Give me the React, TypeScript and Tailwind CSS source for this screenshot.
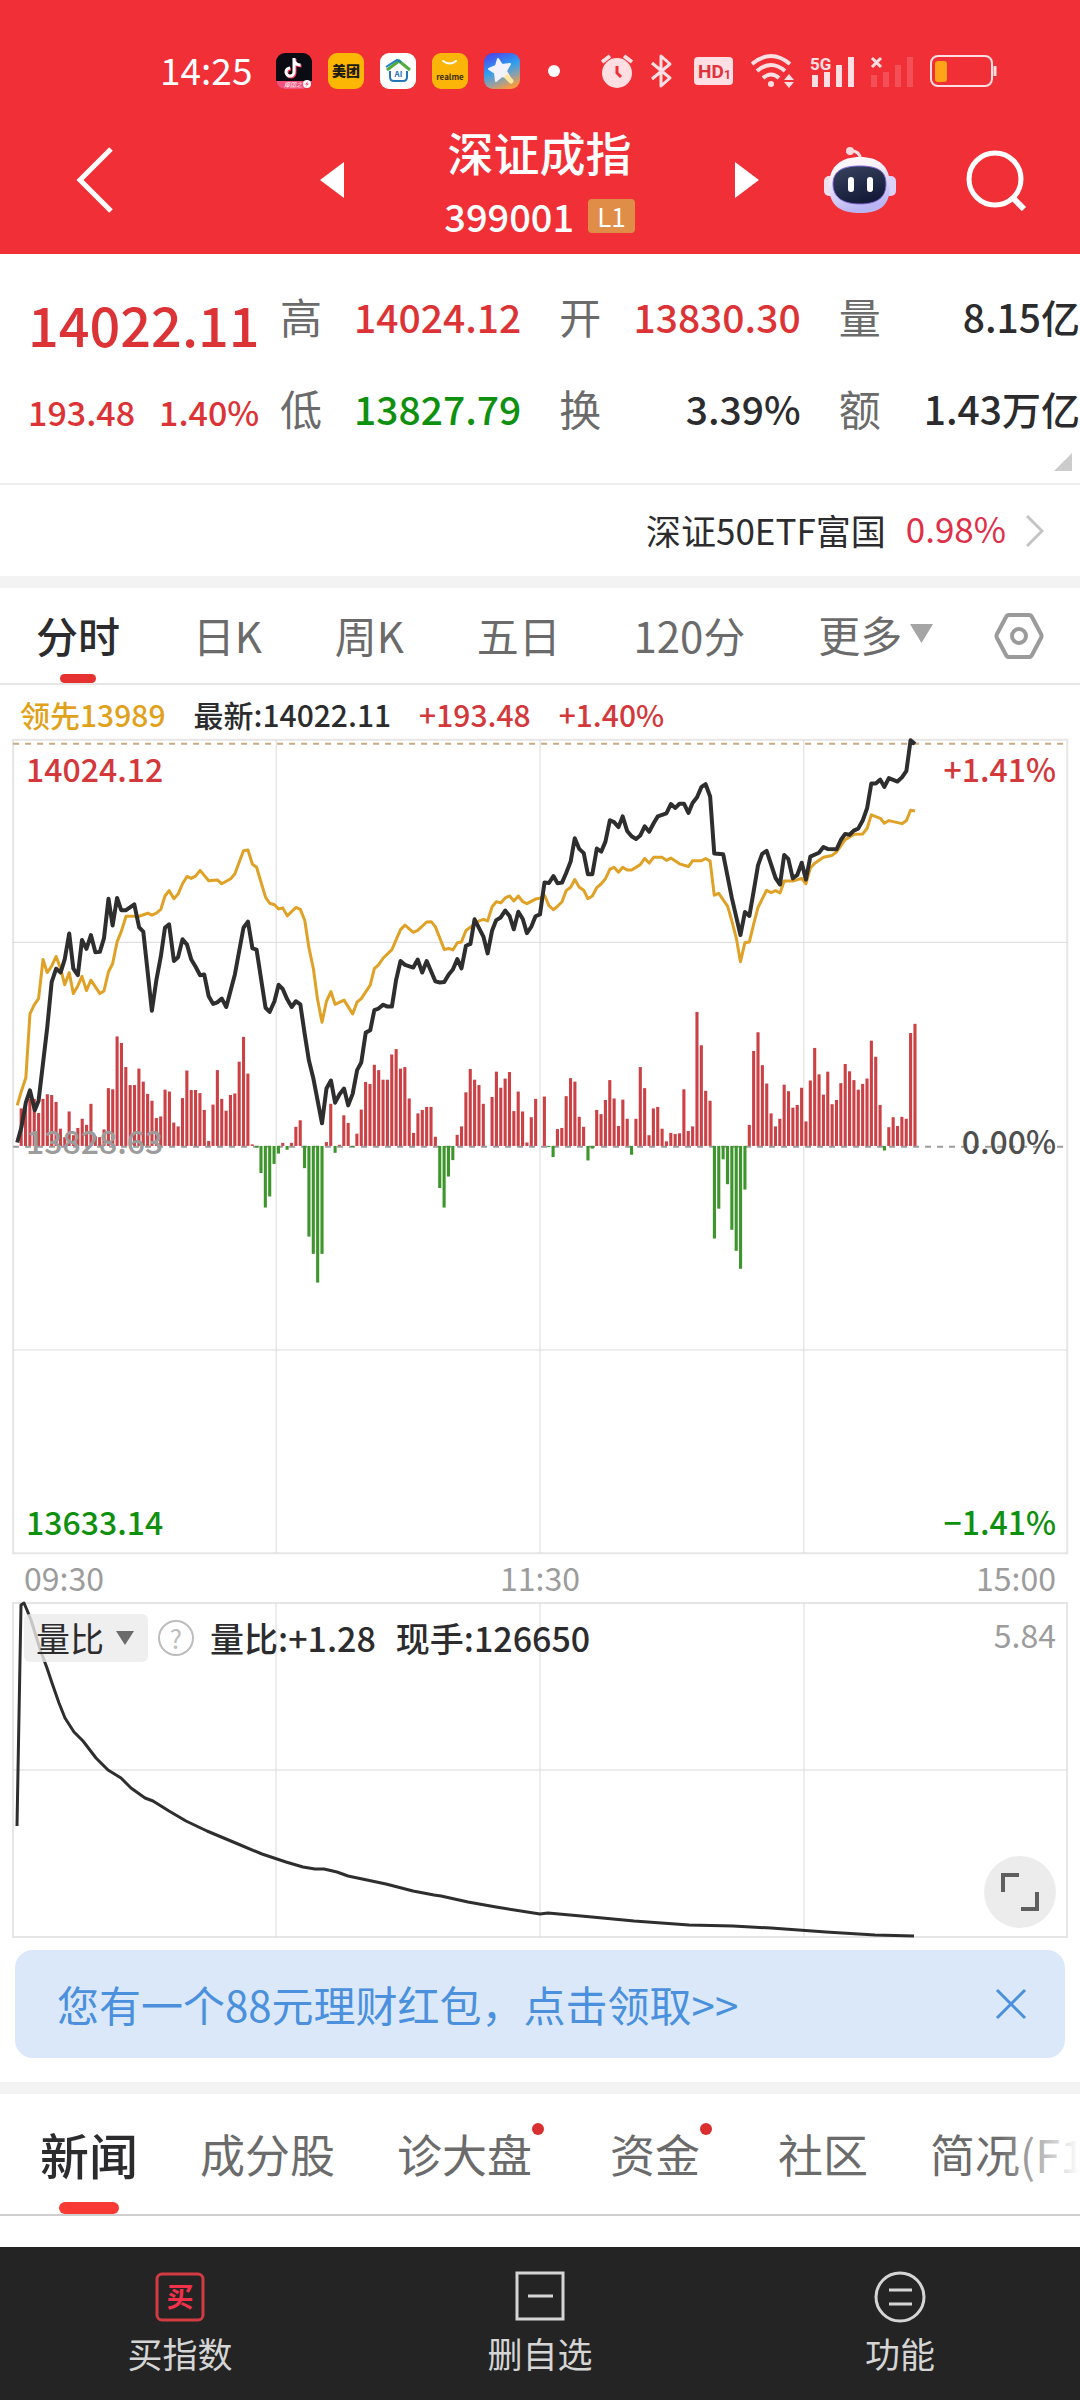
import { useState } from 'react';

// y of the free end of every minute bar, the zero line is at BASE_Y
const BASE_Y = 1113;
const BAR_ENDS = [
  1015, 1005, 990, 990, 1027, 990, 978, 980, 998, 1068, 1090, 1023, 1085, 1066, 1042, 1058, 1003, 1088, 1090, 1070,
  962, 965, 827, 844, 907, 954, 954, 911, 945, 977, 995, 1040, 1036, 966, 971, 1052, 1062, 988, 916, 967,
  967, 975, 1019, 1100, 1005, 915, 990, 1021, 980, 976, 893, 828, 924, 1109, 1117, 1184, 1274, 1245, 1160, 1133,
  1105, 1123, 1105, 1063, 1046, 1171, 1350, 1395, 1470, 1395, 1103, 1003, 1131, 1110, 1033, 1053, 1116, 1081, 1018, 946,
  951, 901, 915, 940, 940, 874, 860, 911, 907, 989, 1079, 1028, 1019, 1011, 1011, 1089, 1223, 1274, 1193, 1150,
  1084, 1062, 973, 912, 940, 954, 1003, 1113, 985, 919, 961, 937, 920, 1022, 971, 1023, 1104, 1038, 990, 1113,
  984, 1116, 1142, 1069, 1066, 983, 936, 945, 1037, 1063, 1151, 1120, 1019, 1030, 993, 941, 989, 1061, 992, 1042,
  1136, 1042, 907, 962, 1085, 1015, 1011, 1068, 1101, 1079, 1082, 1080, 965, 1074, 1062, 763, 850, 969, 995, 1355,
  1277, 1148, 1213, 1332, 1387, 1434, 1227, 1058, 865, 816, 902, 950, 1028, 1062, 1042, 953, 970, 1013, 1006, 961,
  1049, 942, 857, 926, 979, 919, 1004, 993, 949, 899, 918, 941, 966, 951, 937, 838, 880, 1006, 1125, 1064,
  1038, 1061, 1037, 1042, 818, 794,
];

const PRICE_LINE =
  '50,1104 62,1065 75,1000 87,968 101,1020 112,995 137,805 150,685 163,650 176,660 188,625 201,558 213,650 226,667 238,575 251,598 264,562 277,607 290,606 302,570 315,467 327,537 340,465 352,497 366,497 390,482 404,542 416,553 441,760 454,680 467,618 479,543 491,534 505,630 517,620 530,573 543,587 555,625 568,645 581,667 593,665 606,722 619,742 631,738 644,728 657,750 682,665 707,543 720,527 733,597 745,600 771,752 783,763 797,735 809,692 821,703 834,730 847,750 859,735 872,743 885,822 897,890 910,937 935,1054 948,963 961,942 973,1000 986,978 999,963 1011,1007 1024,977 1037,915 1049,895 1062,817 1075,811 1087,758 1099,754 1113,744 1125,749 1138,749 1150,680 1163,630 1176,640 1200,647 1213,626 1226,660 1239,630 1264,683 1277,686 1290,685 1303,665 1315,652 1328,625 1340,649 1353,590 1366,585 1378,521 1404,567 1416,610 1429,550 1441,523 1454,516 1467,498 1480,513 1492,547 1505,501 1518,520 1530,557 1543,540 1555,513 1568,508 1581,425 1594,426 1607,408 1619,427 1632,425 1644,400 1657,370 1669,309 1682,337 1695,348 1707,403 1720,403 1733,336 1746,344 1758,318 1771,262 1783,267 1796,280 1808,252 1821,290 1834,304 1847,311 1859,302 1872,278 1885,292 1898,270 1910,252 1935,244 1948,220 1961,230 1973,219 1986,219 1999,243 2011,217 2024,202 2037,175 2049,168 2062,200 2074,349 2100,351 2125,465 2150,562 2163,502 2176,512 2188,450 2201,380 2213,350 2226,342 2252,413 2265,430 2277,353 2289,363 2302,414 2315,405 2328,373 2340,417 2353,357 2378,347 2391,332 2403,337 2429,338 2442,313 2454,298 2467,300 2479,289 2492,284 2505,263 2518,230 2530,166 2543,166 2556,156 2568,175 2581,152 2606,161 2619,150 2632,133 2644,53 2657,63';

const LEAD_LINE =
  '50,1007 62,970 75,935 87,768 99,745 112,728 125,626 137,660 150,643 163,618 176,650 188,692 201,660 213,715 226,695 238,670 251,707 264,680 290,715 302,708 315,658 327,637 340,580 352,553 366,513 404,513 429,505 441,510 454,505 467,495 479,460 491,446 505,467 517,455 530,428 543,409 555,414 568,408 581,393 606,420 631,418 644,428 670,415 682,402 707,342 720,340 733,377 745,385 771,463 783,479 797,483 809,494 821,491 834,512 859,490 872,495 885,524 897,595 910,650 922,730 935,790 948,735 961,710 973,743 999,732 1024,768 1037,737 1049,728 1075,693 1087,650 1099,640 1113,622 1138,600 1163,548 1176,536 1200,555 1213,550 1239,528 1252,527 1264,540 1290,600 1303,597 1315,601 1328,582 1340,580 1353,550 1391,525 1404,521 1416,525 1429,488 1441,475 1454,478 1467,465 1480,460 1492,473 1505,460 1518,475 1530,480 1555,468 1568,466 1581,458 1594,485 1607,496 1619,487 1632,475 1644,446 1657,437 1669,417 1682,437 1695,445 1707,467 1720,460 1733,438 1746,428 1758,415 1771,390 1783,385 1796,398 1808,385 1821,392 1834,392 1859,378 1872,362 1885,374 1898,359 1923,359 1935,367 1948,361 1973,376 1999,383 2011,368 2037,368 2049,362 2062,369 2074,458 2087,453 2113,487 2125,525 2138,570 2150,632 2163,582 2176,580 2188,535 2201,490 2226,445 2239,451 2252,446 2265,452 2277,421 2302,421 2328,414 2340,428 2353,387 2365,375 2391,359 2416,354 2429,345 2454,313 2479,299 2505,298 2518,283 2530,248 2556,257 2568,270 2581,263 2619,271 2632,263 2644,236 2657,238';

const RATIO_LINE =
  '17,226 21,5 24,3 27,10 31,20 41,52 47,68 52,83 59,103 65,118 74,132 83,141 96,158 108,170 121,178 131,188 145,198 153,201 169,211 186,221 207,231 238,244 262,254 286,262 303,267 315,269 324,269 337,272 348,276 386,284 413,291 434,295 441,296 468,302 496,307 540,314 548,313 592,317 634,321 689,325 733,326 771,328 826,332 875,335 914,336';

const QUOTES = [
  { label: '高', value: '14024.12', color: 'text-[#dc3436]' },
  { label: '开', value: '13830.30', color: 'text-[#dc3436]' },
  { label: '量', value: '8.15亿', color: 'text-[#2c2c2e]' },
  { label: '低', value: '13827.79', color: 'text-[#0f900f]' },
  { label: '换', value: '3.39%', color: 'text-[#2c2c2e]' },
  { label: '额', value: '1.43万亿', color: 'text-[#2c2c2e]' },
];

const PERIODS = ['分时', '日K', '周K', '五日', '120分'];

const SECTIONS = [
  { name: '新闻', dot: false },
  { name: '成分股', dot: false },
  { name: '诊大盘', dot: true },
  { name: '资金', dot: true },
  { name: '社区', dot: false },
  { name: '简况(F10)', dot: false },
];

function AppIcons() {
  return (
    <div className="flex items-center gap-4">
      <svg className="size-9" viewBox="0 0 36 36">
        <rect width="36" height="36" rx="9" fill="#0b0b14" />
        <path d="M19 6v14a4 4 0 1 1-4-4M19 8c.5 3 3 5 6.500 5" fill="none" stroke="#ff3b5c" strokeWidth="3" />
        <path d="M18 5v14a4 4 0 1 1-4-4M18 7c.5 3 3 5 6.500 5" fill="none" stroke="#fff" strokeWidth="3" />
        <path d="M0 28h36a9 9 0 0 1-9 8H9a9 9 0 0 1-9-8z" fill="#f4507c" />
        <text x="8" y="34" fontSize="6" fill="#fff" fontStyle="italic">爆团之</text>
        <circle cx="31" cy="31" r="4" fill="#fff" />
        <path d="m32 28-3 3.500h2L30 34l3-3.500h-2z" fill="#f4507c" />
      </svg>
      <svg className="size-9" viewBox="0 0 36 36">
        <rect width="36" height="36" rx="9" fill="#fbb703" />
        <text x="18" y="23" fontSize="14" fontWeight="900" textAnchor="middle" fill="#1d1a12">美团</text>
      </svg>
      <svg className="size-9" viewBox="0 0 36 36">
        <rect width="36" height="36" rx="9" fill="#fff" />
        <path d="M7 17 19 8l11 9" fill="none" stroke="#52ad3c" strokeWidth="3" />
        <path d="M6 14 17 7l4 2" fill="none" stroke="#1f7fc0" strokeWidth="2" />
        <path d="M10 18v6q0 4 4 4h9q4 0 4-4v-6" fill="none" stroke="#2377b8" strokeWidth="2" />
        <text x="18.500" y="24" fontSize="8" fontWeight="700" textAnchor="middle" fill="#1f6fb4">AI</text>
      </svg>
      <svg className="size-9" viewBox="0 0 36 36">
        <rect width="36" height="36" rx="9" fill="#fbb509" />
        <path d="M11 8q7 5 13 0" fill="none" stroke="#fff" strokeWidth="2" strokeLinecap="round" />
        <text x="18" y="27" fontSize="8" fontWeight="700" textAnchor="middle" fill="#3b2c08">realme</text>
      </svg>
      <svg className="size-9" viewBox="0 0 36 36">
        <defs>
          <linearGradient id="sky" x1="0.200" y1="0" x2="0.600" y2="1">
            <stop offset="0" stopColor="#4d46ea" />
            <stop offset="0.450" stopColor="#2f9df0" />
            <stop offset="0.750" stopColor="#8fa0a8" />
            <stop offset="1" stopColor="#f59a45" />
          </linearGradient>
        </defs>
        <rect width="36" height="36" rx="9" fill="url(#sky)" />
        <path d="m14 6 4 6 8-1-4 7 4 7-8-2-6 5-1-8-6-4 7-3z" fill="#f3f1fa" stroke="#f3f1fa" strokeWidth="2" strokeLinejoin="round" />
        <path d="m23 24 4 4" stroke="#ffe7a0" strokeWidth="5" strokeLinecap="round" />
      </svg>
    </div>
  );
}

function StatusIcons() {
  return (
    <div className="flex items-center gap-4">
      <svg className="h-9 w-[34px]" viewBox="0 0 34 36" fill="#ffdfe1">
        <circle cx="17" cy="20" r="15" />
        <path d="m2 9 8-6M24 3l8 6" stroke="#ffdfe1" strokeWidth="4" />
        <path d="M17 13v7l4 4" fill="none" stroke="#f12f37" strokeWidth="3" />
      </svg>
      <svg className="h-9 w-7" viewBox="0 0 28 36" fill="none" stroke="#ffdfe1" strokeWidth="3">
        <path d="m2 10 18 15-9 8V3l9 8L2 26" strokeLinejoin="round" />
      </svg>
      <svg className="h-9 w-10" viewBox="0 0 40 36">
        <rect y="4" width="39" height="28" rx="4" fill="#ffdfe1" />
        <text x="4" y="25" fontSize="19" fontWeight="700" fill="#e0323a" fontFamily="Roboto, sans-serif">HD</text>
        <text x="30" y="26" fontSize="12" fontWeight="700" fill="#e0323a" fontFamily="Roboto, sans-serif">1</text>
      </svg>
      <svg className="h-9 w-11" viewBox="0 0 44 36" fill="none" stroke="#ffdfe1" strokeWidth="4">
        <path d="M2 11q19-16 38 0M7 18q14-12 28 0M13 25q8-7 16 0" />
        <circle cx="21" cy="31" r="3" fill="#ffdfe1" stroke="none" />
        <path d="m34 27 5-6 5 6zM34 29l5 6 5-6z" fill="#ffdfe1" stroke="none" />
      </svg>
      <svg className="h-9 w-11" viewBox="0 0 44 36" fill="#ffdfe1">
        <path d="M2 22h6v12H2zM14 19h6v15h-6zM26 12h6v22h-6zM38 4h6v30h-6z" />
        <text x="0" y="17" fontSize="17" fontWeight="700" fontFamily="Roboto, sans-serif">5G</text>
      </svg>
      <svg className="h-9 w-11" viewBox="0 0 44 36" fill="#f6656b">
        <path d="M1 22h6v12H1zM13 19h6v15h-6zM25 12h6v22h-6zM37 4h6v30h-6z" opacity="0.600" />
        <path d="m2 5 9 9M11 5l-9 9" stroke="#ffdfe1" strokeWidth="3" />
      </svg>
      <svg className="h-9 w-[68px]" viewBox="0 0 68 36">
        <rect x="1" y="3" width="61" height="30" rx="7" fill="none" stroke="#ffdfe1" strokeWidth="2" />
        <path d="M65 13v10" stroke="#ffdfe1" strokeWidth="3" />
        <rect x="5" y="8" width="12" height="21" rx="3" fill="#ffa416" />
      </svg>
    </div>
  );
}

function Robot() {
  return (
    <svg className="h-[68px] w-[74px]" viewBox="0 0 74 68">
      <defs>
        <linearGradient id="shell" x1="0" y1="0" x2="0.300" y2="1">
          <stop offset="0.300" stopColor="#fbf6fb" />
          <stop offset="1" stopColor="#b9b4f2" />
        </linearGradient>
        <linearGradient id="visor" x1="0" y1="0" x2="0.400" y2="1">
          <stop offset="0" stopColor="#39435f" />
          <stop offset="1" stopColor="#131b38" />
        </linearGradient>
      </defs>
      <path d="M26 5c8-1 11 3 12 9" fill="none" stroke="#ffdfe3" strokeWidth="3" />
      <circle cx="27" cy="5" r="4" fill="#ffd9de" />
      <rect x="1" y="30" width="12" height="20" rx="5" fill="#f2dfee" />
      <rect x="61" y="30" width="12" height="20" rx="5" fill="#d9d3fa" />
      <path d="M37 11c18 0 30 8 30 29S55 67 37 67 6 61 6 40s13-29 31-29z" fill="url(#shell)" />
      <path d="M37 20c19 0 26 6 26 18s-7 20-26 20-27-8-27-20 8-18 27-18z" fill="url(#visor)" stroke="#8267d8" strokeWidth="1" />
      <rect x="25" y="31" width="6" height="15" rx="3" fill="#fff" />
      <rect x="44" y="31" width="6" height="15" rx="3" fill="#fff" />
    </svg>
  );
}

function Header() {
  return (
    <header className="bg-[#f12f37] text-white">
      <div className="flex h-[110px] items-center pt-8 pl-40">
        <time className="w-[116px] pb-1 text-[37px] leading-10">14:25</time>
        <AppIcons />
        <span className="mr-10 ml-7 size-3 rounded-full bg-white" />
        <StatusIcons />
      </div>
      <div className="flex h-36 items-center pb-1">
        <div className="w-[320px] pl-[76px]">
          <button aria-label="返回" className="block">
            <svg className="h-[66px] w-[38px]" viewBox="0 0 38 66" fill="none" stroke="#fff" strokeWidth="5">
              <path d="M35 2 4 33l31 31" />
            </svg>
          </button>
        </div>
        <button aria-label="上一个">
          <svg className="h-9 w-6" viewBox="0 0 24 36"><path d="M24 0v36L0 18z" fill="#fff" /></svg>
        </button>
        <div className="flex flex-1 flex-col items-center gap-3">
          <h1 className="text-[46px] leading-[60px] font-medium">深证成指</h1>
          <div className="flex items-center gap-[14px]">
            <span className="text-[38px] leading-[46px] font-medium">399001</span>
            <span className="rounded-sm bg-[#e08e47] px-[9px] text-[26px] leading-[34px]">L1</span>
          </div>
        </div>
        <button aria-label="下一个">
          <svg className="h-9 w-6" viewBox="0 0 24 36"><path d="M0 0v36l24-18z" fill="#fff" /></svg>
        </button>
        <div className="flex w-[321px] items-center justify-between pr-[53px] pl-[64px]">
          <button aria-label="智能助手"><Robot /></button>
          <button aria-label="搜索">
            <svg className="size-[62px]" viewBox="0 0 62 62" fill="none" stroke="#fff" strokeWidth="5">
              <circle cx="30" cy="30" r="26" />
              <path d="m49 50 10 10" strokeWidth="6" />
            </svg>
          </button>
        </div>
      </div>
    </header>
  );
}

function QuotePanel() {
  return (
    <section className="flex h-[231px] border-b-2 border-[#ececec] font-medium text-[#dc3436]">
      <div className="w-[280px] pt-9 pl-7">
        <div className="text-[54px] leading-[68px]">14022.11</div>
        <div className="flex gap-6 pt-6 text-[34px] leading-[60px]">
          <span>193.48</span>
          <span>1.40%</span>
        </div>
      </div>
      <div className="relative flex-1">
        <dl className="grid grid-cols-3 gap-x-[38px] gap-y-8 pt-8">
          {QUOTES.map((q) => (
            <div key={q.label} className="flex items-center justify-between leading-[60px] whitespace-nowrap">
              <dt className="text-[42px] font-normal text-[#6b6b6b]">{q.label}</dt>
              <dd className={`text-[39px] ${q.color}`}>{q.value}</dd>
            </div>
          ))}
        </dl>
        <svg className="absolute right-2 bottom-3 size-[18px]" viewBox="0 0 18 18"><path d="M18 0v18H0z" fill="#cccccc" /></svg>
      </div>
    </section>
  );
}

function PeriodTabs() {
  const [period, setPeriod] = useState('分时');

  return (
    <nav className="flex h-[97px] justify-between border-b-2 border-[#e6e6e6] px-9 text-[42px]">
      {PERIODS.map((name) => (
        <button
          key={name}
          onClick={() => setPeriod(name)}
          className={`flex flex-col items-center justify-between pt-4 ${
            name === period ? 'font-medium text-[#2c2c2e]' : 'text-[#6b6b6b]'
          }`}
        >
          <span className="leading-[62px]">{name}</span>
          {name === period && <span className="h-[9px] w-9 rounded-full bg-[#e5312f]" />}
        </button>
      ))}
      <button className="-mr-3 flex items-center gap-2 pb-1 text-[#6b6b6b]">
        更多
        <svg className="h-[19px] w-[23px]" viewBox="0 0 23 19"><path d="M0 0h23L11.500 19z" fill="#a5a5a5" /></svg>
      </button>
      <button aria-label="设置">
        <svg className="h-12 w-[50px]" viewBox="0 0 50 48" fill="none" stroke="#9b9b9b" strokeWidth="4">
          <path d="M15 3h20q2 0 3 2l9 17q1 2 0 4l-9 17q-1 2-3 2H15q-2 0-3-2L3 26q-1-2 0-4l9-17q1-2 3-2z" />
          <circle cx="25" cy="24" r="7" />
        </svg>
      </button>
    </nav>
  );
}

function MinuteChart() {
  return (
    <div className="relative h-[821px] text-[32px] leading-10 font-medium">
      <svg className="h-full w-full" viewBox="0 42 3136 2145" preserveAspectRatio="none" fill="none">
        <path d="M38 52H3099V2177H38z" stroke="#e6e6e6" strokeWidth="2" vectorEffect="non-scaling-stroke" />
        <path
          d="M38 581H3099M38 1646H3099M802 52V2177M1568 52V2177M2334 52V2177"
          stroke="#dadada"
          strokeWidth="1"
          vectorEffect="non-scaling-stroke"
        />
        <path d="M38 62H3099" stroke="#c9ac82" strokeWidth="2" strokeDasharray="6 6" vectorEffect="non-scaling-stroke" />
        <path d="M38 1115H3099" stroke="#9c9c9c" strokeWidth="2" strokeDasharray="6 6" vectorEffect="non-scaling-stroke" />
        {BAR_ENDS.map((end, i) => (
          <rect
            key={i}
            x={57 + i * 12.66}
            y={Math.min(end, BASE_Y)}
            width="9"
            height={Math.abs(end - BASE_Y)}
            fill={end < BASE_Y ? '#cb4145' : '#3c962b'}
          />
        ))}
        <polyline points={LEAD_LINE} stroke="#dfa126" strokeWidth="3" strokeLinejoin="round" vectorEffect="non-scaling-stroke" />
        <polyline points={PRICE_LINE} stroke="#2e2e2e" strokeWidth="4" strokeLinejoin="round" vectorEffect="non-scaling-stroke" />
      </svg>
      <span className="absolute top-3 left-[26px] text-[#d3383b]">14024.12</span>
      <span className="absolute top-3 right-6 text-[#d3383b]">+1.41%</span>
      <span className="absolute top-96 left-[26px] text-[#9c9c9c]">13828.63</span>
      <span className="absolute top-96 right-6 text-[#4f4f4f]">0.00%</span>
      <span className="absolute bottom-4 left-[26px] text-[#0f900f]">13633.14</span>
      <span className="absolute right-6 bottom-4 text-[#0f900f]">−1.41%</span>
    </div>
  );
}

function RatioChart() {
  return (
    <div className="relative h-[340px] text-[34px] leading-[48px] text-[#2c2c2e]">
      <svg className="h-full w-full" viewBox="0 0 1080 340" preserveAspectRatio="none" fill="none">
        <path d="M13 3H1067V337H13z" stroke="#e6e6e6" strokeWidth="2" />
        <path d="M13 170H1067M276 3V337M540 3V337M804 3V337" stroke="#dadada" strokeWidth="1" />
        <polyline points={RATIO_LINE} stroke="#2e2e2e" strokeWidth="3" strokeLinejoin="round" />
      </svg>
      <div className="absolute inset-x-6 top-[14px] flex items-center">
        <label className="flex items-center gap-3 rounded-md bg-[#ebebeb]/80 pr-[14px] pl-3">
          <select aria-label="指标" className="appearance-none bg-transparent">
            <option>量比</option>
          </select>
          <svg className="h-[14px] w-[18px]" viewBox="0 0 18 14"><path d="M0 0h18L9 14z" fill="#6b6b6b" /></svg>
        </label>
        <button aria-label="说明" className="ml-[10px] size-9 rounded-full border-2 border-[#bdbdbd] text-[26px] leading-8 text-[#bdbdbd]">?</button>
        <span className="ml-4 font-medium">量比:+1.28</span>
        <span className="ml-5 font-medium">现手:126650</span>
        <span className="ml-auto pb-2 text-[32px] leading-10 text-[#9c9c9c]">5.84</span>
      </div>
      <button aria-label="全屏" className="absolute right-6 bottom-3 flex size-[72px] items-center justify-center rounded-full bg-[#ececec]">
        <svg className="size-[38px]" viewBox="0 0 38 38" fill="none" stroke="#5f5f5f" strokeWidth="4">
          <path d="M2 19V2h16M36 19v17H20" />
        </svg>
      </button>
    </div>
  );
}

function Banner() {
  const [open, setOpen] = useState(true);
  if (!open) return null;

  return (
    <div className="mx-[15px] mt-[10px] flex h-[108px] items-center justify-between rounded-[18px] bg-[#dae8fa] pr-[38px] pl-[42px] text-[#4a90dc]">
      <a href="#gift" className="text-[42px] leading-[60px]">您有一个88元理财红包，点击领取&gt;&gt;</a>
      <button aria-label="关闭" onClick={() => setOpen(false)}>
        <svg className="size-8" viewBox="0 0 32 32" fill="none" stroke="#4a90dc" strokeWidth="3"><path d="m2 2 28 28M30 2 2 30" /></svg>
      </button>
    </div>
  );
}

function SectionTabs() {
  const [active, setActive] = useState('新闻');

  return (
    <nav className="relative flex h-[122px] gap-[62px] overflow-hidden border-b-2 border-[#cfcfcf] pl-10 text-[45px] whitespace-nowrap">
      {SECTIONS.map((s) => (
        <button
          key={s.name}
          onClick={() => setActive(s.name)}
          className={`relative flex shrink-0 flex-col items-center justify-between pt-[26px] ${s.dot ? 'mr-4' : ''} ${
            s.name === active ? 'text-[49px] font-medium text-[#2c2c2e]' : 'text-[#6b6b6b]'
          }`}
        >
          <span className="leading-[68px]">{s.name}</span>
          {s.name === active && <span className="h-3 w-[60px] rounded-full bg-[#f83a34]" />}
          {s.dot && <span className="absolute top-[29px] -right-3 size-3 rounded-full bg-[#d9302f]" />}
        </button>
      ))}
      <span className="absolute inset-y-0 right-0 w-20 bg-gradient-to-r from-white/0 to-white" />
    </nav>
  );
}

function BottomBar() {
  return (
    <footer className="mt-[31px] grid h-[155px] grid-cols-3 bg-[#242424] text-[35px] leading-[44px] text-[#d5d5d5]">
      <button className="flex flex-col items-center gap-2 pt-6">
        <svg className="size-[52px]" viewBox="0 0 52 52" fill="none" stroke="#d33b43" strokeWidth="3">
          <rect x="3" y="3" width="46" height="46" rx="5" />
          <text x="26" y="36" fontSize="27" fontWeight="700" textAnchor="middle" fill="#f2304a" stroke="none">买</text>
        </svg>
        买指数
      </button>
      <button className="flex flex-col items-center gap-2 pt-6">
        <svg className="size-[52px]" viewBox="0 0 52 52" fill="none" stroke="#d5d5d5" strokeWidth="3">
          <path d="M3 2h46v46H3zM14 25h25" />
        </svg>
        删自选
      </button>
      <button className="flex flex-col items-center gap-2 pt-6">
        <svg className="size-[52px]" viewBox="0 0 52 52" fill="none" stroke="#d5d5d5" strokeWidth="3">
          <circle cx="26" cy="26" r="24" />
          <path d="M15 19h23M15 33h23" />
        </svg>
        功能
      </button>
    </footer>
  );
}

export default function App() {
  return (
    <div className="min-h-screen overflow-x-hidden bg-white font-['Noto_Sans_CJK_SC',sans-serif] text-[#2c2c2e]">
      <Header />
      <QuotePanel />
      <a href="#etf" className="flex h-[91px] items-center justify-end pr-9 text-[35px]">
        <span>深证50ETF富国</span>
        <span className="ml-5 pb-1 text-[#e02f49]">0.98%</span>
        <svg className="ml-5 h-8 w-[18px]" viewBox="0 0 18 32" fill="none" stroke="#c4c4c4" strokeWidth="3"><path d="m1 1 15 15L1 31" /></svg>
      </a>
      <div className="h-3 bg-[#f3f3f3]" />
      <PeriodTabs />
      <div className="flex h-[51px] items-end gap-7 pl-5 text-[30px] leading-[44px] font-medium">
        <span className="text-[#e0a11b]">领先13989</span>
        <span>最新:14022.11</span>
        <span className="text-[#d3383b]">+193.48</span>
        <span className="text-[#d3383b]">+1.40%</span>
      </div>
      <MinuteChart />
      <div className="flex h-[43px] items-center justify-between px-6 pb-1 text-[32px] text-[#9c9c9c]">
        <span>09:30</span>
        <span>11:30</span>
        <span>15:00</span>
      </div>
      <RatioChart />
      <Banner />
      <div className="mt-6 h-3 bg-[#f3f3f3]" />
      <SectionTabs />
      <BottomBar />
    </div>
  );
}
